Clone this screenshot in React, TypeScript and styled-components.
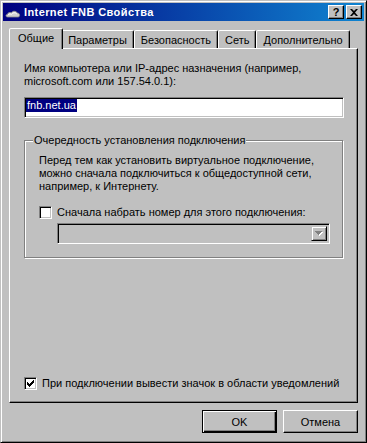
import React from "react";
import styled, { createGlobalStyle, css } from "styled-components";

const Global = createGlobalStyle`
  html, body { margin: 0; padding: 0; background: #c0c0c0; }
  body {
    font-family: "Liberation Sans", Arial, sans-serif;
    font-size: 11px;
    color: #000;
  }
  * { box-sizing: border-box; }
`;

const Window = styled.div`
  width: 367px;
  height: 443px;
  background: #c0c0c0;
  border: 1px solid;
  border-color: #c0c0c0 #000 #000 #c0c0c0;
  box-shadow: inset 1px 1px #fff, inset -1px -1px #808080;
  padding: 2px;
  display: flex;
  flex-direction: column;
`;

const TitleBar = styled.div`
  flex: none;
  height: 18px;
  background: linear-gradient(to right, #000080, #1084d0);
  display: flex;
  align-items: center;
  padding: 0 2px;
  color: #fff;
  font-weight: bold;
  font-size: 11px;
`;

const TitleText = styled.span`
  margin-left: 3px;
  white-space: nowrap;
  letter-spacing: 0.4px;
`;

const TitleButtons = styled.div`
  margin-left: auto;
  display: flex;
  gap: 2px;
`;

const TitleButton = styled.div`
  width: 16px;
  height: 14px;
  background: #c0c0c0;
  border: 1px solid;
  border-color: #fff #000 #000 #fff;
  box-shadow: inset -1px -1px #808080;
  display: flex;
  align-items: center;
  justify-content: center;
  color: #000;
  font-weight: bold;
  font-size: 11px;
  line-height: 1;
`;

const Body = styled.div`
  flex: 1;
  display: flex;
  flex-direction: column;
  padding: 7px 6px 0 6px;
`;

const TabStrip = styled.div`
  display: flex;
  align-items: flex-start;
  height: 21px;
  margin-bottom: -1px;
  padding-left: 2px;
`;

const Tab = styled.div<{ $active?: boolean }>`
  position: relative;
  height: 18px;
  margin-top: 2px;
  padding: 0 6px;
  display: flex;
  align-items: center;
  background: #c0c0c0;
  border: 1px solid;
  border-bottom: none;
  border-color: #fff #000 transparent #fff;
  border-radius: 2px 2px 0 0;
  box-shadow: inset -1px 0 #808080;
  white-space: nowrap;
  ${(p) =>
    p.$active &&
    css`
      height: 21px;
      margin: 0 -2px;
      padding: 0 8px 2px;
      z-index: 1;
    `}
`;

const Panel = styled.div`
  height: 355px;
  flex: none;
  border: 1px solid;
  border-color: #fff #000 #000 #fff;
  box-shadow: inset -1px -1px #808080;
  padding: 13px 13px 12px 14px;
  display: flex;
  flex-direction: column;
`;

const Text = styled.div`
  line-height: 13px;
`;

const TextField = styled.div`
  margin-top: 9px;
  height: 21px;
  background: #fff;
  border: 1px solid;
  border-color: #808080 #fff #fff #808080;
  box-shadow: inset 1px 1px #000, inset -1px -1px #c0c0c0;
  padding: 1px 1px 0 1px;
  display: flex;
  align-items: flex-start;
`;

const Selected = styled.span`
  background: #000080;
  color: #fff;
  line-height: 13px;
  padding: 0 1px;
`;

const GroupBox = styled.fieldset`
  margin: 16px 1px 0 0;
  padding: 0 0 13px 8px;
  border: 1px solid #808080;
  box-shadow: inset 1px 1px #fff, 1px 1px #fff;
  min-width: 0;
`;

const GroupLegend = styled.legend`
  padding: 0 1px;
  line-height: 13px;
  background: #c0c0c0;
`;

const GroupBody = styled.div`
  padding: 7px 12px 0 6px;
  display: flex;
  flex-direction: column;
`;

const CheckRow = styled.label<{ $push?: boolean }>`
  display: flex;
  align-items: center;
  gap: 5px;
  line-height: 13px;
  margin-top: ${(p) => (p.$push ? "auto" : "13px")};
  white-space: nowrap;
`;

const CheckBox = styled.span`
  flex: none;
  width: 13px;
  height: 13px;
  background: #fff;
  border: 1px solid;
  border-color: #808080 #fff #fff #808080;
  box-shadow: inset 1px 1px #000, inset -1px -1px #c0c0c0;
  display: flex;
  align-items: center;
  justify-content: center;
`;

const Combo = styled.div`
  margin: 4px 0 0 18px;
  height: 21px;
  background: #c0c0c0;
  border: 1px solid;
  border-color: #808080 #fff #fff #808080;
  box-shadow: inset 1px 1px #000, inset -1px -1px #c0c0c0;
  padding: 2px;
  display: flex;
  justify-content: flex-end;
`;

const ComboButton = styled.div`
  width: 16px;
  height: 15px;
  background: #c0c0c0;
  border: 1px solid;
  border-color: #c0c0c0 #000 #000 #c0c0c0;
  box-shadow: inset 1px 1px #fff, inset -1px -1px #808080;
  display: flex;
  align-items: center;
  justify-content: center;
`;

const ButtonRow = styled.div`
  margin-top: 7px;
  display: flex;
  justify-content: flex-end;
  gap: 6px;
`;

const Button = styled.button<{ $default?: boolean }>`
  width: 75px;
  height: 23px;
  padding: 0;
  font-family: inherit;
  font-size: 11px;
  color: #000;
  background: #c0c0c0;
  border: 1px solid;
  border-color: #fff #000 #000 #fff;
  box-shadow: inset -1px -1px #808080;
  ${(p) =>
    p.$default &&
    css`
      border-color: #000;
      box-shadow: inset 1px 1px #fff, inset -1px -1px #000,
        inset -2px -2px #808080;
    `}
`;

const CloudIcon = () => (
  <svg width="16" height="16" viewBox="0 0 16 16">
    <path
      d="M2.5 13 C0.5 13 0.5 10.5 2.5 10.3 C2.8 8.6 5 8 6.3 8.8 C7.4 6.8 11.2 6.6 12.3 9 C14.8 8.8 15.6 12.6 13.2 13 Z"
      fill="#d0d0d0"
      stroke="#8a8a8a"
      strokeWidth="0.8"
    />
    <path
      d="M3 10.8 C4 9.8 5.5 9.8 6.5 10.4 C7.5 8.4 10.5 8.2 11.8 10"
      fill="none"
      stroke="#fff"
      strokeWidth="1"
    />
  </svg>
);

const CloseGlyph = () => (
  <svg width="8" height="7" viewBox="0 0 8 7">
    <path d="M0 0h2l2 2l2-2h2l-3 3.5l3 3.5h-2l-2-2l-2 2h-2l3-3.5z" fill="#000" />
  </svg>
);

const CheckMark = () => (
  <svg width="7" height="7" viewBox="0 0 7 7" shapeRendering="crispEdges">
    <path
      d="M6 0h1v3h-1v1h-1v1h-1v1h-1v1h-1v-1h-1v-1h-1v-3h1v1h1v1h1v-1h1v-1h1z"
      fill="#000"
    />
  </svg>
);

const DownArrow = () => (
  <svg width="8" height="5" viewBox="0 0 8 5" shapeRendering="crispEdges">
    <path d="M1 1h7l-3.5 4z" fill="#fff" />
    <path d="M0 0h7l-3.5 4z" fill="#808080" />
  </svg>
);

const tabs = ["Общие", "Параметры", "Безопасность", "Сеть", "Дополнительно"];

export default function App() {
  return (
    <>
      <Global />
      <Window>
        <TitleBar>
          <CloudIcon />
          <TitleText>Internet FNB Свойства</TitleText>
          <TitleButtons>
            <TitleButton>?</TitleButton>
            <TitleButton>
              <CloseGlyph />
            </TitleButton>
          </TitleButtons>
        </TitleBar>
        <Body>
          <TabStrip>
            {tabs.map((t, i) => (
              <Tab key={t} $active={i === 0}>
                {t}
              </Tab>
            ))}
          </TabStrip>
          <Panel>
            <Text>
              Имя компьютера или IP-адрес назначения (например,
              <br />
              microsoft.com или 157.54.0.1):
            </Text>
            <TextField>
              <Selected>fnb.net.ua</Selected>
            </TextField>
            <GroupBox>
              <GroupLegend>Очередность установления подключения</GroupLegend>
              <GroupBody>
                <Text>
                  Перед тем как установить виртуальное подключение,
                  <br />
                  можно сначала подключиться к общедоступной сети,
                  <br />
                  например, к Интернету.
                </Text>
                <CheckRow>
                  <CheckBox />
                  Сначала набрать номер для этого подключения:
                </CheckRow>
                <Combo>
                  <ComboButton>
                    <DownArrow />
                  </ComboButton>
                </Combo>
              </GroupBody>
            </GroupBox>
            <CheckRow $push>
              <CheckBox>
                <CheckMark />
              </CheckBox>
              При подключении вывести значок в области уведомлений
            </CheckRow>
          </Panel>
          <ButtonRow>
            <Button $default>OK</Button>
            <Button>Отмена</Button>
          </ButtonRow>
        </Body>
      </Window>
    </>
  );
}
